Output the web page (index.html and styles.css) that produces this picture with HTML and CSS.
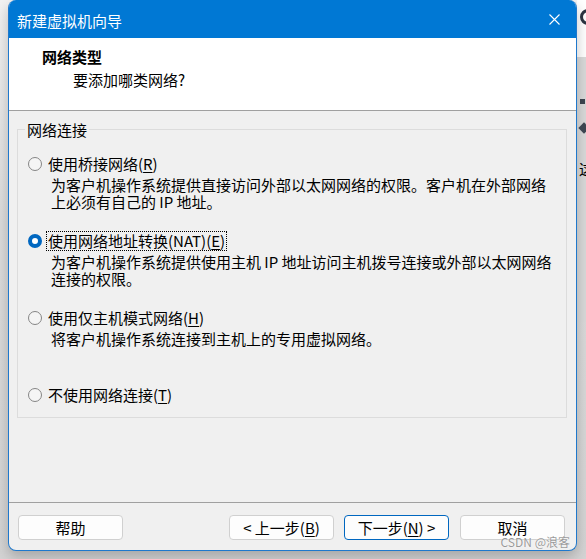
FILE: index.html
```html
<!DOCTYPE html>
<html lang="zh-CN">
  <head>
    <meta charset="UTF-8" />
    <title>新建虚拟机向导</title>
    <link rel="stylesheet" href="styles.css">
  </head>
  <body>
    <div class="wizard">
      <div class="titlebar">
        <span class="title">新建虚拟机向导</span>
        <svg class="close" width="11" height="11" viewBox="0 0 11 11">
          <path d="M0.5 0.5 L10.5 10.5 M10.5 0.5 L0.5 10.5" stroke="#fff" stroke-width="1.1" fill="none" />
        </svg>
      </div>

      <div class="header">
        <h1>网络类型</h1>
        <p>要添加哪类网络?</p>
      </div>

      <div class="content">
        <fieldset class="group">
          <legend>网络连接</legend>
          <div class="options">
            <div class="option">
              <label class="radio-row">
                <input type="radio" name="net" class="radio" />
                <span class="label">使用桥接网络(<u>R</u>)</span>
              </label>
              <div class="desc">为客户机操作系统提供直接访问外部以太网网络的权限。客户机在外部网络<br>上必须有自己的 IP 地址。</div>
            </div>
            <div class="option">
              <label class="radio-row">
                <input type="radio" name="net" class="radio" checked />
                <span class="label focused">使用网络地址转换(NAT)(<u>E</u>)</span>
              </label>
              <div class="desc">为客户机操作系统提供使用主机 IP 地址访问主机拨号连接或外部以太网网络<br>连接的权限。</div>
            </div>
            <div class="option">
              <label class="radio-row">
                <input type="radio" name="net" class="radio" />
                <span class="label">使用仅主机模式网络(<u>H</u>)</span>
              </label>
              <div class="desc">将客户机操作系统连接到主机上的专用虚拟网络。</div>
            </div>
            <div class="option">
              <label class="radio-row">
                <input type="radio" name="net" class="radio" />
                <span class="label">不使用网络连接(<u>T</u>)</span>
              </label>
            </div>
          </div>
        </fieldset>
      </div>

      <div class="footer">
        <button class="btn help">帮助</button>
        <button class="btn">&lt; 上一步(<u>B</u>)</button>
        <button class="btn btn-default">下一步(<u>N</u>) &gt;</button>
        <button class="btn cancel">取消</button>
      </div>

      <span class="watermark">CSDN @浪客</span>
    </div>

    <div class="side">
      <div class="side-top">
        <span class="side-icon"></span>
      </div>
      <div class="side-panel">
        <span class="side-dot"></span>
        <span class="side-arrow"></span>
        <span class="side-char">这</span>
      </div>
    </div>
  </body>
</html>
```

FILE: styles.css
```css
* {
  box-sizing: border-box;
}

body {
  margin: 0;
  height: 559px;
  display: flex;
  align-items: flex-start;
  overflow: hidden;
  background: linear-gradient(#f2f2f2, #dcdcdc 40%, #d4d4d4);
  font-family: "Noto Sans CJK SC", "Liberation Sans", sans-serif;
  font-size: 15px;
  color: #000;
}

.wizard {
  position: relative;
  margin-left: 8px;
  width: 569px;
  height: 551px;
  display: flex;
  flex-direction: column;
  background: #f0f0f0;
  border: 1px solid #1f78cc;
  border-top: 0;
  border-radius: 8px;
  overflow: hidden;
  box-shadow: 0 6px 14px rgba(0, 0, 0, 0.22);
}

.titlebar {
  height: 38px;
  flex: none;
  display: flex;
  align-items: center;
  justify-content: space-between;
  padding: 0 16px 0 8px;
  background: #0078d4;
  color: #fff;
  line-height: 17px;
}

.title {
  margin-top: 2px;
}

.close {
  display: block;
  margin-top: 1px;
}

.header {
  height: 73px;
  flex: none;
  background: #fff;
  border-bottom: 1px solid #a0a0a0;
  padding: 10px 0 0 33px;
  line-height: 17px;
}

.header h1 {
  margin: 0;
  font-size: 15px;
  font-weight: bold;
}

.header p {
  margin: 6px 0 0 31px;
}

.content {
  height: 391px;
  flex: none;
  padding: 10px 9px 0 8px;
}

.group {
  margin: 0;
  padding: 15px 0 12px 0;
  border: 1px solid #dcdcdc;
  min-width: 0;
}

.group legend {
  margin-left: 7px;
  padding: 0 2px;
  line-height: 17px;
}

.options {
  display: grid;
  grid-template-rows: repeat(3, 77px) auto;
  padding-left: 10px;
}

.radio-row {
  display: flex;
  align-items: center;
  height: 21px;
}

.radio {
  appearance: none;
  -webkit-appearance: none;
  margin: 0 4px 0 0;
  width: 14px;
  height: 14px;
  flex: none;
  border: 1px solid #858585;
  border-radius: 50%;
  background: #f5f5f5;
}

.radio:checked {
  border: 4px solid #0067c0;
  background: #fff;
}

.label {
  display: inline-block;
  line-height: 18px;
  padding: 0 1px;
  border: 1px dotted transparent;
  white-space: nowrap;
}

.label.focused {
  border-color: #000;
}

.label u,
.btn u {
  text-underline-offset: 2px;
}

.desc {
  margin-top: 2px;
  padding-left: 23px;
  line-height: 17px;
  white-space: nowrap;
}

.footer {
  flex: none;
  display: flex;
  gap: 10px;
  padding: 12px 11px 0 9px;
  border-top: 1px solid #a0a0a0;
}

.btn {
  width: 105px;
  height: 25px;
  padding: 0;
  font-family: inherit;
  font-size: 15px;
  line-height: 17px;
  color: #000;
  background: #fdfdfd;
  border: 1px solid #d0d0d0;
  border-radius: 4px;
}

.btn.help {
  margin-right: auto;
}

.btn.cancel {
  margin-left: 1px;
}

.btn-default {
  border-color: #0067c0;
}

.watermark {
  position: absolute;
  right: 6px;
  bottom: 2px;
  font-size: 12px;
  line-height: 12px;
  color: rgba(120, 120, 120, 0.75);
  text-shadow: 0 0 1px #fff;
}

.side {
  flex: 1;
  height: 100%;
  display: flex;
  flex-direction: column;
  overflow: hidden;
}

.side-top {
  height: 57px;
  flex: none;
  background: #fff;
  padding: 9px 0 0 3px;
}

.side-icon {
  display: block;
  width: 16px;
  height: 16px;
  border: 3px solid #2b3542;
  border-radius: 50%;
}

.side-panel {
  flex: none;
  height: 265px;
  background: #d9d9d9;
  padding: 42px 0 0 3px;
}

.side-dot {
  display: block;
  width: 5px;
  height: 5px;
  background: #3c4550;
}

.side-arrow {
  display: block;
  margin-top: 20px;
  width: 8px;
  height: 8px;
  background: #3c4550;
  transform: rotate(45deg);
}

.side-char {
  display: block;
  margin: 28px 0 0 -1px;
  font-size: 15px;
  line-height: 17px;
}
```
